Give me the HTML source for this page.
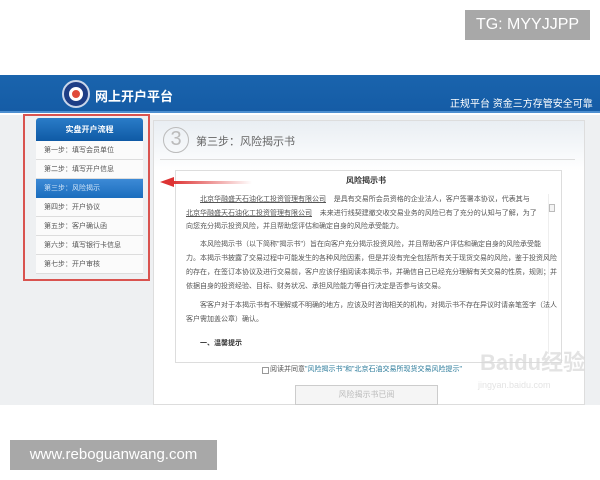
<!DOCTYPE html>
<html><head><meta charset="utf-8"><style>
*{margin:0;padding:0;box-sizing:border-box}
body{width:600px;height:480px;background:#fff;position:relative;overflow:hidden;font-family:"Liberation Sans","Noto Sans CJK SC",sans-serif}
.a{position:absolute}
.t{color:#555;font-size:7px;white-space:nowrap;line-height:14px}
</style></head><body>
<div class="a" style="left:465px;top:10px;width:125px;height:30px;background:#a8a8a8;color:#fff;font-size:16px;line-height:30px;text-align:center">TG: MYYJJPP</div>
<div class="a" style="left:0;top:75px;width:600px;height:38px;background:linear-gradient(#1a64ad,#155ca6);border-bottom:2px solid #4d8fd0"></div>
<div class="a" style="left:62px;top:80px;width:28px;height:28px;border-radius:50%;background:#1d3e86;border:2px solid #c9d6ea"></div>
<div class="a" style="left:69px;top:87px;width:14px;height:14px;border-radius:50%;background:#e04b3a;border:3px solid #fff"></div>
<div class="a" style="left:95px;top:86px;color:#fff;font-size:13px;font-weight:bold">网上开户平台</div>
<div class="a" style="left:450px;top:95px;color:#fff;font-size:10px">正规平台 资金三方存管安全可靠</div>
<div class="a" style="left:0;top:115px;width:600px;height:290px;background:#eef0f2"></div>
<div class="a" style="left:153px;top:120px;width:432px;height:285px;background:linear-gradient(#e9eef3,#fff 50px);border:1px solid #ddd"></div>
<div class="a" style="left:163px;top:127px;width:26px;height:26px;border-radius:50%;border:1.5px solid #bbb;color:#bbb;font-size:20px;line-height:23px;text-align:center">3</div>
<div class="a" style="left:196px;top:133px;color:#666;font-size:11px">第三步：风险揭示书</div>
<div class="a" style="left:160px;top:159px;width:415px;height:1px;background:#ddd"></div>
<div class="a" style="left:175px;top:170px;width:387px;height:193px;background:#fff;border:1px solid #ddd"></div>
<div class="a" style="left:548px;top:194px;width:8px;height:160px;border-left:1px solid #eee"></div>
<div class="a" style="left:549px;top:204px;width:6px;height:8px;border:1px solid #bbb;background:#f4f4f4"></div>
<div class="a" style="left:346px;top:175px;color:#333;font-size:8px;font-weight:bold">风险揭示书</div>
<div class="a t" style="left:200px;top:193px"><u>北京华融盛天石油化工投资管理有限公司</u>&nbsp;&nbsp;&nbsp;&nbsp;是具有交易所会员资格的企业法人，客户签署本协议，代表其与</div>
<div class="a t" style="left:186px;top:207px"><u>北京华融盛天石油化工投资管理有限公司</u>&nbsp;&nbsp;&nbsp;&nbsp;未来进行线契建撤交收交易业务的风险已有了充分的认知与了解，为了</div>
<div class="a t" style="left:186px;top:220px">向您充分揭示投资风险，并且帮助您评估和确定自身的风险承受能力。</div>
<div class="a t" style="left:200px;top:238px">本风险揭示书（以下简称"揭示书"）旨在向客户充分揭示投资风险，并且帮助客户评估和确定自身的风险承受能</div>
<div class="a t" style="left:186px;top:252px">力。本揭示书披露了交易过程中可能发生的各种风险因素，但是并没有完全包括所有关于现货交易的风险，鉴于投资风险</div>
<div class="a t" style="left:186px;top:266px">的存在，在签订本协议及进行交易前，客户应该仔细阅读本揭示书，并确信自己已经充分理解有关交易的性质，规则；并</div>
<div class="a t" style="left:186px;top:280px">依据自身的投资经验、目标、财务状况、承担风险能力等自行决定是否参与该交易。</div>
<div class="a t" style="left:200px;top:299px">客客户对于本揭示书有不理解或不明确的地方，应该及时咨询相关的机构，对揭示书不存在异议时请亲笔签字（法人</div>
<div class="a t" style="left:186px;top:313px">客户需加盖公章）确认。</div>
<div class="a t" style="left:200px;top:337px;color:#333;font-weight:bold">一、温馨提示</div>
<div class="a" style="left:262px;top:367px;width:7px;height:7px;border:1px solid #999;background:#fff"></div>
<div class="a t" style="left:270px;top:363px">阅读并同意<span style="color:#2a7a9a">"风险揭示书"和"北京石油交易所现货交易风险提示"</span></div>
<div class="a" style="left:295px;top:385px;width:143px;height:20px;background:#f5f5f5;border:1px solid #ccc;color:#bbb;font-size:8px;line-height:18px;text-align:center">风险揭示书已阅</div>
<div class="a" style="left:480px;top:345px;color:rgba(215,215,215,.7);font-size:22px;font-weight:bold">Baidu经验</div>
<div class="a" style="left:478px;top:380px;color:rgba(215,215,215,.7);font-size:9px">jingyan.baidu.com</div>
<div class="a" style="left:23px;top:114px;width:127px;height:167px;border:2px solid #d9534f"></div>
<div class="a" style="left:36px;top:118px;width:107px;height:23px;background:linear-gradient(#2a7cc8,#0f5aa5);border-radius:3px 3px 0 0;color:#fff;font-size:8px;font-weight:bold;text-align:center;line-height:23px">实盘开户流程</div>
<div class="a" style="left:36px;top:141px;width:107px">
<div style="height:19px;border-bottom:1px solid #ddd;background:#fbfbfb;color:#555;font-size:7px;line-height:19px;padding-left:8px">第一步：填写会员单位</div>
<div style="height:19px;border-bottom:1px solid #ddd;background:#fbfbfb;color:#555;font-size:7px;line-height:19px;padding-left:8px">第二步：填写开户信息</div>
<div style="height:19px;background:linear-gradient(#3d8ad6,#1a6dbd);color:#cfe3f7;font-size:7px;line-height:19px;padding-left:8px">第三步：风险揭示</div>
<div style="height:19px;border-bottom:1px solid #ddd;background:#fbfbfb;color:#555;font-size:7px;line-height:19px;padding-left:8px">第四步：开户协议</div>
<div style="height:19px;border-bottom:1px solid #ddd;background:#fbfbfb;color:#555;font-size:7px;line-height:19px;padding-left:8px">第五步：客户确认函</div>
<div style="height:19px;border-bottom:1px solid #ddd;background:#fbfbfb;color:#555;font-size:7px;line-height:19px;padding-left:8px">第六步：填写银行卡信息</div>
<div style="height:19px;border-bottom:1px solid #ddd;background:#fbfbfb;color:#555;font-size:7px;line-height:19px;padding-left:8px">第七步：开户审核</div>
</div>
<div class="a" style="left:172px;top:181px;width:80px;height:3px;background:linear-gradient(90deg,#d33,rgba(220,60,60,0))"></div>
<div class="a" style="left:160px;top:177px;width:0;height:0;border-top:5px solid transparent;border-bottom:5px solid transparent;border-right:14px solid #d33"></div>
<div class="a" style="left:10px;top:440px;width:207px;height:30px;background:#a8a8a8;color:#fff;font-size:15px;line-height:30px;text-align:center">www.reboguanwang.com</div>
</body></html>
